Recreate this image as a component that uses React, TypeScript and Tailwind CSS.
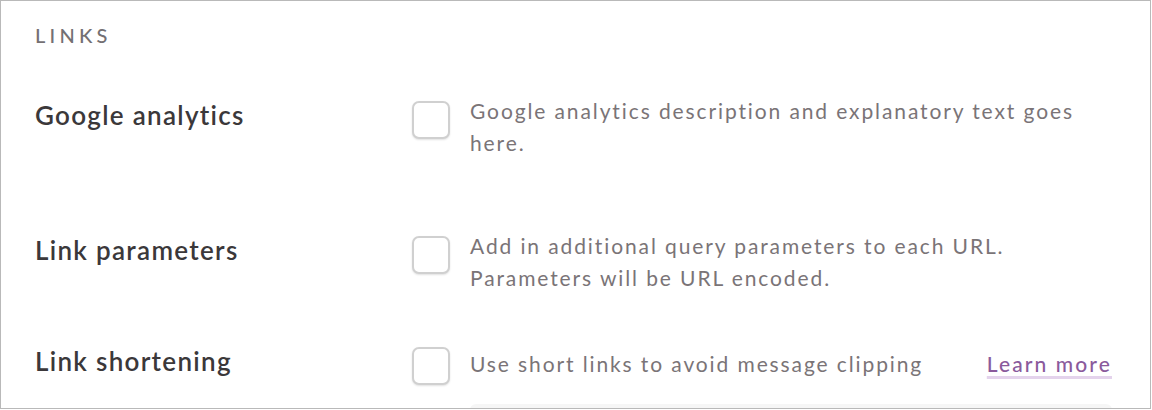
import React from "react";

type Row = {
  label: string;
  body: React.ReactNode;
  className: string;
};

function Checkbox() {
  return (
    <div className="mt-[4px] h-[38px] w-[38px] shrink-0 rounded-[7px] border-2 border-[#d0d0d0] bg-white shadow-[0_1px_2px_rgba(0,0,0,0.12)]" />
  );
}

function SettingRow({ label, body, className }: Row) {
  return (
    <div className={`flex items-start ${className}`}>
      <div className="mt-[2px] w-[377px] shrink-0 text-[26px] font-semibold leading-[32px] tracking-[1.3px] text-[#3b383a]">
        {label}
      </div>
      <Checkbox />
      <div className="ml-[20px] mt-[-2px] flex-1 text-[21px] leading-[32px] tracking-[0.09em] text-[#7a7477]">
        {body}
      </div>
    </div>
  );
}

export default function App() {
  return (
    <div
      className="h-[409px] w-[1151px] overflow-hidden border border-[#b9b9b9] bg-white pl-[34px] pr-[38px] pt-[22px]"
      style={{ fontFamily: "Lato, 'Noto Sans', sans-serif" }}
    >
      <div className="text-[20px] font-medium leading-[24px] tracking-[0.21em] text-[#747073]">LINKS</div>

      <SettingRow
        className="mt-[50px]"
        label="Google analytics"
        body={<p>Google analytics description and explanatory text goes here.</p>}
      />

      <SettingRow
        className="mt-[73px]"
        label="Link parameters"
        body={<p>Add in additional query parameters to each URL. Parameters will be URL encoded.</p>}
      />

      <SettingRow
        className="mt-[49px]"
        label="Link shortening"
        body={
          <div className="pt-[7px]">
            <div className="flex items-start justify-between">
              <span>Use short links to avoid message clipping</span>
              <a
                href="#"
                className="text-[21px] font-medium tracking-[0.1em] text-[#8a5a9c] underline decoration-[#e4d3ec] decoration-[3px] underline-offset-[4px]"
              >
                Learn more
              </a>
            </div>
            <div className="mt-[24px] h-[40px] rounded-[6px] bg-[#f6f6f6]" />
          </div>
        }
      />
    </div>
  );
}
